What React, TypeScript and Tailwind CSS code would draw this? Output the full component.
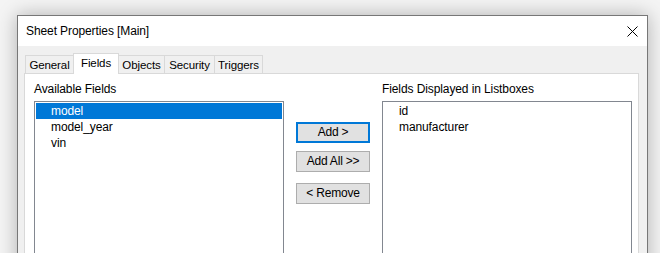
import React from "react";

const font = { fontFamily: '"Liberation Sans", Arial, sans-serif' };

function Tab({ label, w, selected }: { label: string; w: string; selected?: boolean }) {
  if (selected) {
    return (
      <div
        className={`${w} -ml-px h-[21px] mb-[-1px] relative z-10 bg-white border-l border-t border-r border-[#d9d9d9] flex items-start justify-center pt-[2px] text-[11.5px] leading-[15px] tracking-[-0.1px] text-black`}
      >
        {label}
      </div>
    );
  }
  return (
    <div
      className={`${w} -ml-px first:ml-[1px] h-[18px] bg-[#f0f0f0] border-l border-t border-r border-[#d9d9d9] flex items-start justify-center pt-[2px] text-[11.5px] leading-[15px] tracking-[-0.1px] text-black`}
    >
      {label}
    </div>
  );
}

function ListBox({ items, selected }: { items: string[]; selected?: number }) {
  return (
    <div className="w-[250px] h-[200px] border border-[#828790] bg-white p-px">
      {items.map((it, i) => (
        <div
          key={it}
          className={`h-[16px] pl-[15px] text-[12px] leading-[16px] tracking-[-0.1px] ${
            i === selected ? "bg-[#0078d7] text-white" : "text-black"
          }`}
        >
          {it}
        </div>
      ))}
    </div>
  );
}

function Btn({ label, focused, className }: { label: string; focused?: boolean; className?: string }) {
  return (
    <div
      className={`w-[74px] h-[21px] bg-[#e1e1e1] flex items-center justify-center text-[12px] leading-[15px] tracking-[-0.2px] text-black ${
        focused ? "border-2 border-[#0078d7]" : "border border-[#adadad]"
      } ${className ?? ""}`}
    >
      {label}
    </div>
  );
}

export default function App() {
  return (
    <div className="w-[660px] h-[253px] overflow-hidden bg-[#f4f4f4] pl-[17px] pt-[15px]" style={font}>
      <div className="w-[631px] h-[260px] border border-[#777777] shadow-[0_0_18px_rgba(0,0,0,0.28)] flex flex-col">
        <div className="h-[30px] bg-white flex items-center justify-between pl-[8px] pr-[8px] shrink-0">
          <span className="text-[12px] leading-[15px] tracking-[-0.1px] text-black">Sheet Properties [Main]</span>
          <svg width="11" height="11" viewBox="0 0 11 11" className="mr-[1px]">
            <path d="M0.5 0.5 L10.5 10.5 M10.5 0.5 L0.5 10.5" stroke="#000" strokeWidth="1" />
          </svg>
        </div>
        <div className="flex-1 bg-[#f0f0f0] pl-[6px] pt-[7px]">
          <div className="flex items-end h-[20px]">
            <Tab label="General" w="w-[49px]" />
            <Tab label="Fields" w="w-[46px]" selected />
            <Tab label="Objects" w="w-[47px]" />
            <Tab label="Security" w="w-[51px]" />
            <Tab label="Triggers" w="w-[49px]" />
          </div>
          <div className="w-[615px] h-[200px] bg-white border border-[#d9d9d9] pl-[9px] pt-[8px] flex gap-[12px]">
            <div className="flex flex-col">
              <div className="text-[12px] leading-[15px] tracking-[-0.1px] text-black mb-[4px]">Available Fields</div>
              <ListBox items={["model", "model_year", "vin"]} selected={0} />
            </div>
            <div className="flex flex-col pt-[40px]">
              <Btn label="Add >" focused />
              <Btn label="Add All >>" className="mt-[8px]" />
              <Btn label="< Remove" className="mt-[11px]" />
            </div>
            <div className="flex flex-col">
              <div className="text-[12px] leading-[15px] tracking-[-0.1px] text-black mb-[4px]">Fields Displayed in Listboxes</div>
              <ListBox items={["id", "manufacturer"]} />
            </div>
          </div>
        </div>
      </div>
    </div>
  );
}
